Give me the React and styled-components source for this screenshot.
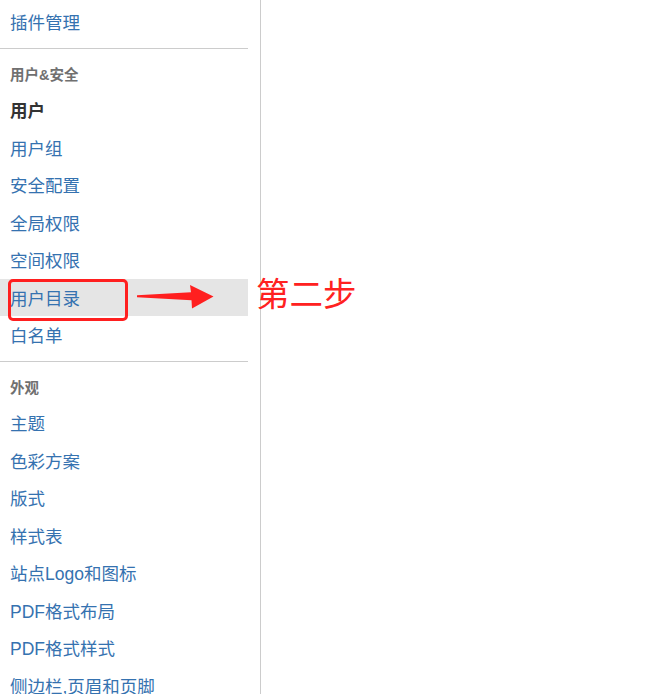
import React from 'react';
import styled, { createGlobalStyle } from 'styled-components';

const GlobalStyle = createGlobalStyle`
  html, body {
    margin: 0;
    padding: 0;
    background: #fff;
  }
  body {
    font-family: "Liberation Sans", "Noto Sans CJK SC", sans-serif;
  }
`;

const Page = styled.div`
  display: flex;
  height: 694px;
  overflow: hidden;
`;

const Sidebar = styled.nav`
  width: 261px;
  flex-shrink: 0;
  border-right: 1px solid #cccccc;
  padding: 3px 12px 0 0;
  box-sizing: border-box;
`;

const Divider = styled.hr`
  margin: 7px 0 0 0;
  border: none;
  border-top: 1px solid #cccccc;
  height: 0;
`;

const Heading = styled.div`
  padding: 16px 10px 6.5px;
  line-height: 20px;
  font-size: 14.5px;
  font-weight: bold;
  color: #707070;
`;

const Item = styled.div`
  position: relative;
  height: 37.5px;
  box-sizing: border-box;
  padding: 3px 0 0 10px;
  line-height: 34.5px;
  font-size: 17.5px;
  white-space: nowrap;
  color: ${(p) => (p.$active ? '#333333' : '#3572b0')};
  font-weight: ${(p) => (p.$active ? 'bold' : 'normal')};
  background: ${(p) => (p.$selected ? '#e5e5e5' : 'transparent')};
`;

const Content = styled.main`
  flex: 1;
`;

/* screenshot annotation drawn on top of the selected row */
const MarkBox = styled.div`
  position: absolute;
  left: 8px;
  top: 0;
  width: 120px;
  height: 42px;
  box-sizing: border-box;
  border: 3px solid #ff1f1f;
  border-radius: 5px;
`;

const MarkArrow = styled.svg`
  position: absolute;
  left: 130px;
  top: 1px;
`;

const MarkLabel = styled.span`
  position: absolute;
  left: 256px;
  top: -7px;
  font-family: "Noto Sans CJK SC", sans-serif;
  font-size: 33.5px;
  line-height: 40px;
  font-weight: normal;
  color: #ff2121;
`;

const Annotation = () => (
  <>
    <MarkBox />
    <MarkArrow width="90" height="35" viewBox="0 0 90 35">
      <polygon
        points="7,15.2 61,12.3 60,5 83.5,16.6 62,28.5 61.5,20.3 7,17.3"
        fill="#ff1f1f"
      />
    </MarkArrow>
    <MarkLabel>第二步</MarkLabel>
  </>
);

const groups = [
  {
    title: '用户&安全',
    items: ['用户', '用户组', '安全配置', '全局权限', '空间权限', '用户目录', '白名单'],
  },
  {
    title: '外观',
    items: ['主题', '色彩方案', '版式', '样式表', '站点Logo和图标', 'PDF格式布局', 'PDF格式样式', '侧边栏,页眉和页脚'],
  },
];

const App = () => {
  return (
    <>
      <GlobalStyle />
      <Page>
        <Sidebar>
          <Item>插件管理</Item>
          {groups.map((g) => (
            <React.Fragment key={g.title}>
              <Divider />
              <Heading>{g.title}</Heading>
              {g.items.map((name) => (
                <Item
                  key={name}
                  $active={name === '用户'}
                  $selected={name === '用户目录'}
                >
                  {name}
                  {name === '用户目录' && <Annotation />}
                </Item>
              ))}
            </React.Fragment>
          ))}
        </Sidebar>
        <Content />
      </Page>
    </>
  );
};

export default App;
